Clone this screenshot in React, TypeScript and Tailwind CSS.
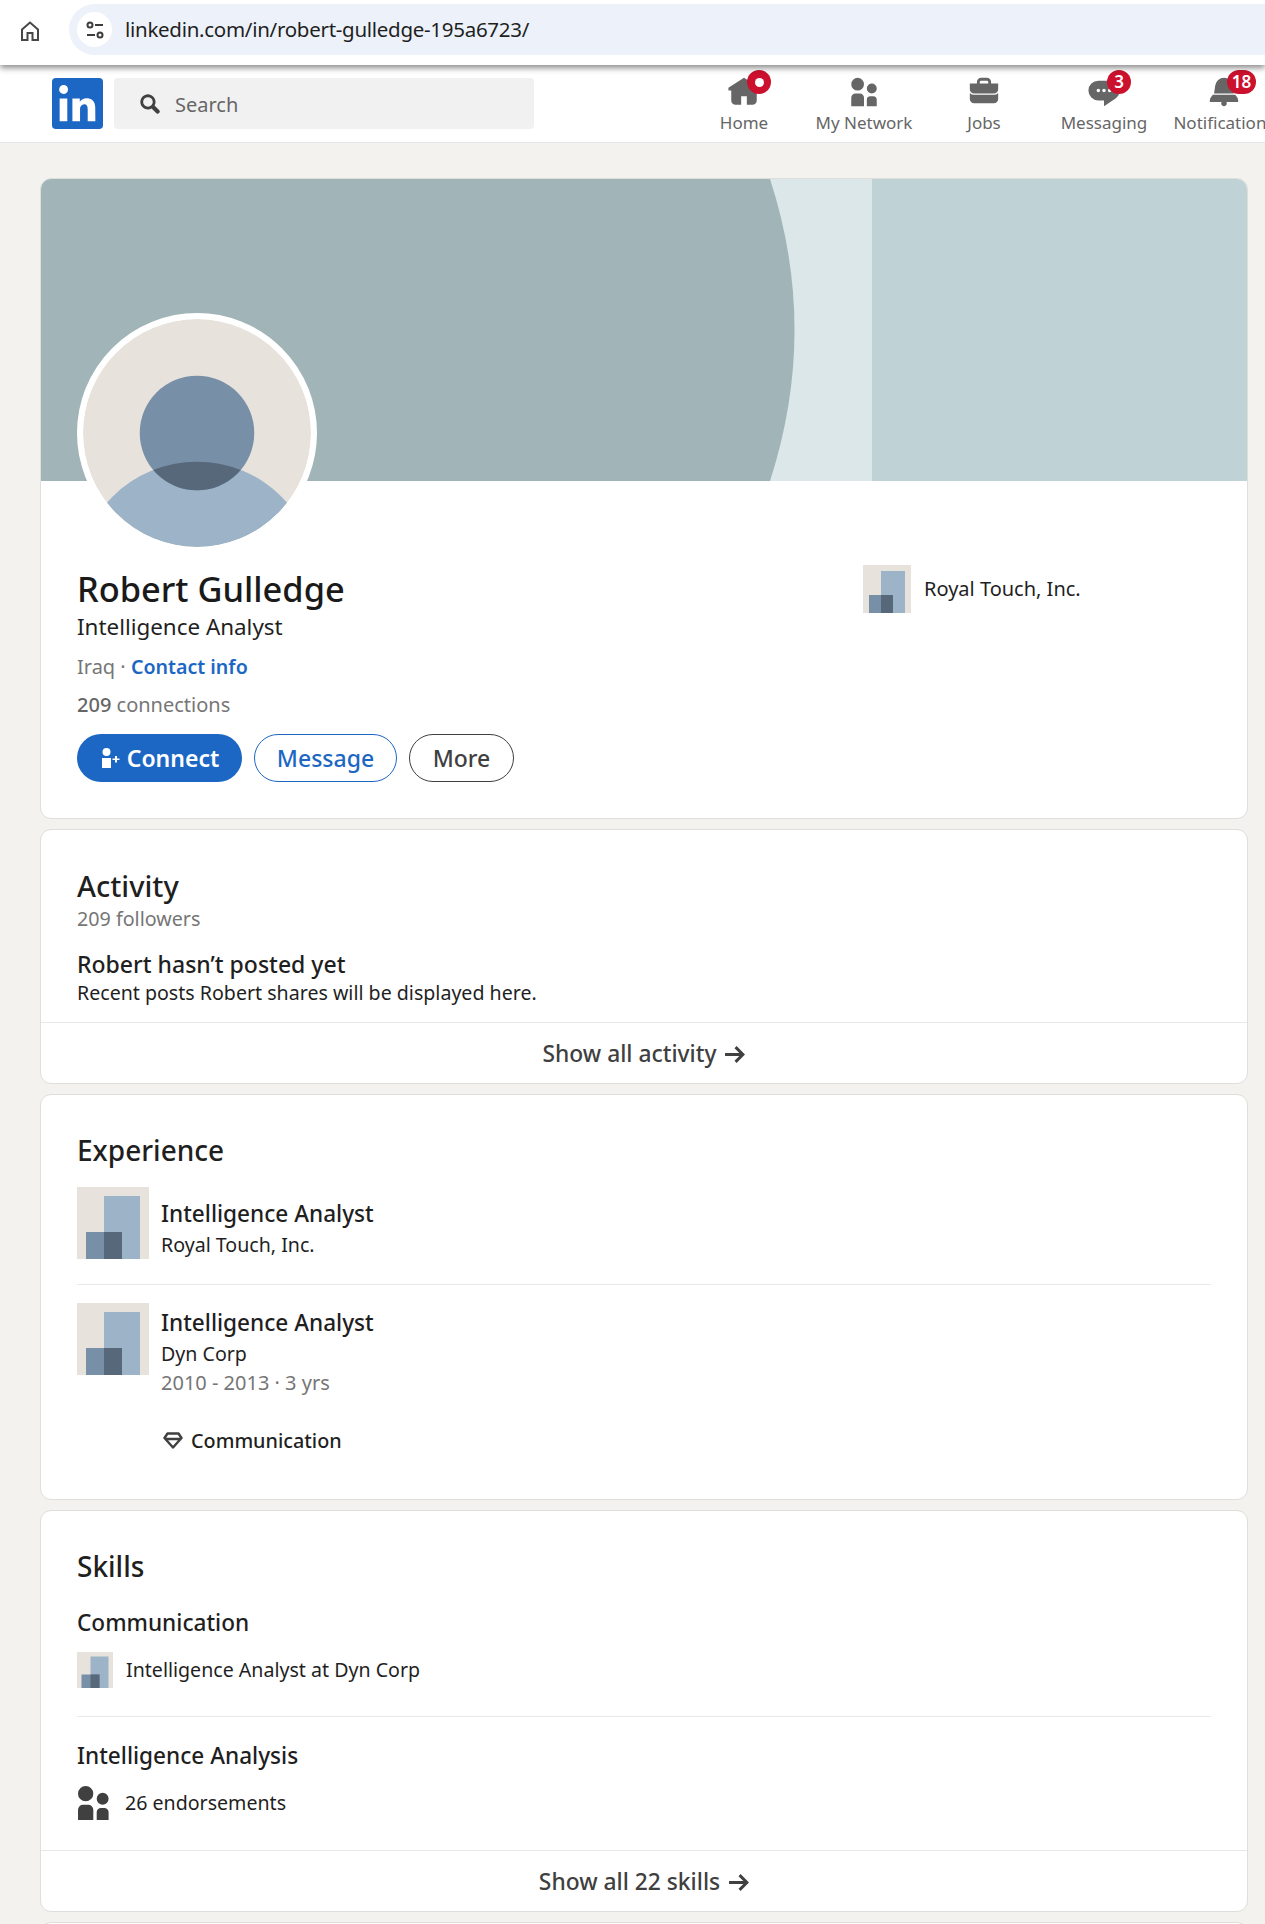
import type { ReactNode } from "react";

function GhostLogo({ size }: { size: number }) {
  return (
    <svg width={size} height={size} viewBox="0 0 72 72" className="shrink-0">
      <rect width="72" height="72" fill="#e7e2dc" />
      <rect x="27" y="9" width="36" height="63" fill="#9db3c8" />
      <rect x="9" y="45" width="36" height="27" fill="#788fa8" />
      <rect x="27" y="45" width="18" height="27" fill="#56687a" />
    </svg>
  );
}

function Avatar() {
  return (
    <svg viewBox="0 0 227 227" className="block h-full w-full rounded-full">
      <defs>
        <clipPath id="inner">
          <circle cx="113.5" cy="113.5" r="113.5" />
        </clipPath>
        <clipPath id="head">
          <circle cx="113.5" cy="113.5" r="57" />
        </clipPath>
      </defs>
      <g clipPath="url(#inner)">
        <rect width="227" height="227" fill="#e7e2dc" />
        <circle cx="113.5" cy="261" r="119" fill="#9db3c8" />
        <circle cx="113.5" cy="113.5" r="57" fill="#788fa8" />
        <circle cx="113.5" cy="261" r="119" fill="#56687a" clipPath="url(#head)" />
      </g>
    </svg>
  );
}

function Badge({ children, className }: { children: ReactNode; className: string }) {
  return (
    <span
      className={`absolute flex h-6 items-center justify-center rounded-full bg-[#cb112d] text-[17px] font-semibold text-white ${className}`}
    >
      {children}
    </span>
  );
}

function NavItem({ label, path, children }: { label: string; path: string; children?: ReactNode }) {
  return (
    <div className="flex w-[120px] shrink-0 flex-col items-center whitespace-nowrap">
      <div className="relative mt-[1px] h-[34px] w-[34px]">
        <svg viewBox="0 0 24 24" className="h-[34px] w-[34px] fill-[#666666]">
          <path d={path} />
        </svg>
        {children}
      </div>
      <span className="mt-[2px] text-[17px] leading-[24px] text-[#666666]">{label}</span>
    </div>
  );
}

function Card({ children, className = "" }: { children: ReactNode; className?: string }) {
  return (
    <section
      className={`relative overflow-hidden rounded-[11px] border border-[#dfdeda] bg-white ${className}`}
    >
      {children}
    </section>
  );
}

function ShowAll({ label }: { label: string }) {
  return (
    <div className="flex h-[61px] items-center justify-center gap-[8px] border-t border-[#e8e8e8] pt-[2px] text-[22.8px] font-medium text-[#404040]">
      {label}
      <svg viewBox="0 0 20 18" fill="none" stroke="#404040" strokeWidth="2.800" className="h-[19px] w-[21px]">
        <path d="M1 9h17M11 2l7 7-7 7" />
      </svg>
    </div>
  );
}

export default function App() {
  return (
    <div className="h-[1924px] overflow-hidden bg-[#f3f2ef] font-['Noto_Sans',sans-serif] text-[#1f1f1f]">
      {/* browser bar */}
      <div className="relative z-10 flex h-[65px] items-start bg-white pt-[4px] shadow-[0_3px_6px_rgba(0,0,0,0.45)]">
        <svg viewBox="0 0 24 24" fill="none" stroke="#474747" strokeWidth="2" className="ml-[18px] mt-[15px] h-6 w-6">
          <path d="M4 10.5 12 3.5l8 7V21h-5.500v-7h-5v7H4z" />
        </svg>
        <div className="ml-[27px] flex h-[51px] flex-1 items-center rounded-l-full bg-[#edf2fa] pl-[8px]">
          <div className="flex h-[35px] w-[35px] items-center justify-center rounded-full bg-white">
            <svg viewBox="0 0 20 20" fill="none" stroke="#3c3c3c" strokeWidth="2" className="h-5 w-5">
              <circle cx="5" cy="5" r="2.500" />
              <path d="M10 5h8M2 15h8" />
              <circle cx="15" cy="15" r="2.500" />
            </svg>
          </div>
          <span className="ml-[13px] text-[20.5px] tracking-[-0.28px] text-[#1f1f1f]">linkedin.com/in/robert-gulledge-195a6723/</span>
        </div>
      </div>

      {/* linkedin nav */}
      <header className="flex h-[78px] items-center overflow-hidden border-b border-[#e6e6e6] bg-white pl-[52px]">
        <svg viewBox="2 2 20 20" className="h-[51px] w-[51px] shrink-0 fill-[#1d67c4]">
          <path d="M20.500 2h-17A1.500 1.500 0 002 3.500v17A1.500 1.500 0 003.500 22h17a1.500 1.500 0 001.500-1.500v-17A1.500 1.500 0 0020.500 2zM8 19H5v-9h3zM6.500 8.250A1.750 1.750 0 118.300 6.500a1.780 1.780 0 01-1.800 1.750zM19 19h-3v-4.740c0-1.420-.6-1.930-1.380-1.930A1.740 1.740 0 0013 14.190a.66.66 0 000 .14V19h-3v-9h2.900v1.300a3.110 3.110 0 012.700-1.400c1.550 0 3.360.86 3.360 3.660z" />
        </svg>
        <div className="ml-[11px] flex h-[51px] w-[420px] shrink-0 items-center rounded-[4px] bg-[#f1f1f1] pl-[25px]">
          <svg viewBox="0 0 16 16" className="h-[22px] w-[22px] fill-[#404040]">
            <path d="M14.560 12.440L11.300 9.180a5.510 5.510 0 10-2.120 2.120l3.260 3.260a1.500 1.500 0 102.120-2.120zM3 6.500A3.500 3.500 0 116.500 10 3.500 3.500 0 013 6.500z" />
          </svg>
          <span className="ml-[14px] pt-[3px] text-[20px] text-[#666666]">Search</span>
        </div>
        <nav className="ml-[150px] flex shrink-0 pt-[2px]">
          <NavItem label="Home" path="M23 9v2h-2v7a3 3 0 01-3 3h-4v-6h-4v6H6a3 3 0 01-3-3v-7H1V9l11-7 5 3.180V2h3v5.090z">
            <Badge className="left-[20px] top-[-5px] w-6">
              <span className="h-[9px] w-[9px] rounded-full bg-white" />
            </Badge>
          </NavItem>
          <NavItem label="My Network" path="M12 16v6H3v-6a3 3 0 013-3h3a3 3 0 013 3zm5.500-3A3.500 3.500 0 1014 9.500a3.500 3.500 0 003.500 3.500zm1 2h-2a2.500 2.500 0 00-2.500 2.500V22h7v-4.500a2.500 2.500 0 00-2.500-2.500zM7.500 2A4.500 4.500 0 1012 6.500 4.490 4.490 0 007.500 2z" />
          <NavItem label="Jobs" path="M17 6V5a3 3 0 00-3-3h-4a3 3 0 00-3 3v1H2v4a3 3 0 003 3h14a3 3 0 003-3V6zM9 5a1 1 0 011-1h4a1 1 0 011 1v1H9zm10 9a4 4 0 003-1.380V17a3 3 0 01-3 3H5a3 3 0 01-3-3v-4.380A4 4 0 005 14z" />
          <NavItem label="Messaging" path="M16 4H8a7 7 0 000 14h4v4l8.160-5.390A6.780 6.780 0 0023 11a7 7 0 00-7-7zm-8 8.250A1.250 1.250 0 119.250 11 1.250 1.250 0 018 12.250zm4 0A1.250 1.250 0 1113.250 11 1.250 1.250 0 0112 12.250zm4 0A1.250 1.250 0 1117.250 11 1.250 1.250 0 0116 12.250z">
            <Badge className="left-[20px] top-[-5px] w-6">3</Badge>
          </NavItem>
          <NavItem label="Notifications" path="M22 19h-8.280a2 2 0 11-3.440 0H2v-1a4.520 4.520 0 011.170-2.830l1-1.170h15.700l1 1.170A4.520 4.520 0 0122 18zM18.210 7.440A6.270 6.270 0 0012 2a6.270 6.270 0 00-6.210 5.440L5 13h14z">
            <Badge className="left-[20px] top-[-5px] w-[29px]">18</Badge>
          </NavItem>
        </nav>
      </header>

      <main className="flex flex-col gap-[10px] pl-[40px] pr-[17px] pt-[35px]">
        {/* profile card */}
        <Card className="h-[641px]">
          <svg viewBox="0 0 1206 303" preserveAspectRatio="none" className="block h-[302px] w-full">
            <rect width="1206" height="303" fill="#bfd3d6" />
            <rect width="831" height="303" fill="#dbe7e9" />
            <path d="M0 0H729Q778 151 729 303H0z" fill="#a1b4b8" />
          </svg>
          <div className="absolute left-[36px] top-[134px] h-[240px] w-[240px] rounded-full border-[6.5px] border-white bg-white">
            <Avatar />
          </div>
          <div className="flex justify-between pl-[36px] pr-[166px]">
            <div className="pt-[85px]">
              <h1 className="text-[34.4px] font-medium leading-[45px] text-[#1a1a1a]">Robert Gulledge</h1>
              <p className="mt-[1px] text-[22.4px] leading-[30px]">Intelligence Analyst</p>
              <p className="mt-[11px] text-[20px] leading-[28px] text-[#767676]">
                Iraq · <span className="text-[19.6px] font-semibold text-[#1d67c4]">Contact info</span>
              </p>
              <p className="mt-[10px] text-[20px] leading-[28px] text-[#767676]">
                <span className="font-medium text-[#666666]">209</span> connections
              </p>
              <div className="mt-[15px] flex gap-3">
                <div className="flex h-[48px] w-[165px] items-center justify-center gap-[7px] rounded-full bg-[#1d67c4] text-[23px] font-semibold text-white">
                  <svg viewBox="0 0 20 24" className="h-[24px] w-[20px] fill-white">
                    <circle cx="6.500" cy="6" r="4" />
                    <path d="M2 12h9v10H2zM15 10h2v2.500h2.500v1.500H17v2.500h-2V14h-2.500v-1.500H15z" />
                  </svg>
                  Connect
                </div>
                <div className="flex h-[48px] w-[143px] items-center justify-center rounded-full border-[1.5px] border-[#1d67c4] text-[23px] font-medium text-[#1d67c4]">
                  Message
                </div>
                <div className="flex h-[48px] w-[105px] items-center justify-center rounded-full border-[1.5px] border-[#404040] text-[23px] font-medium text-[#404040]">
                  More
                </div>
              </div>
            </div>
            <div className="mt-[84px] flex h-[48px] w-[218px] items-center gap-[13px] self-start">
              <GhostLogo size={48} />
              <span className="whitespace-nowrap text-[20px]">Royal Touch, Inc.</span>
            </div>
          </div>
        </Card>

        {/* activity */}
        <Card className="h-[255px]">
          <div className="h-[192px] px-[36px] pt-[36px]">
            <h2 className="text-[29px] font-medium leading-[40px]">Activity</h2>
            <p className="text-[19.7px] leading-[26px] text-[#767676]">209 followers</p>
            <p className="mt-[17px] text-[23px] font-medium leading-[30px]">Robert hasn’t posted yet</p>
            <p className="text-[19.6px] leading-[28px]">Recent posts Robert shares will be displayed here.</p>
          </div>
          <ShowAll label="Show all activity" />
        </Card>

        {/* experience */}
        <Card className="h-[406px] px-[36px] pt-[35px]">
          <h2 className="text-[28px] font-medium leading-[40px]">Experience</h2>
          <div className="mt-[17px] flex h-[98px] gap-3 border-b border-[#e8e8e8]">
            <GhostLogo size={72} />
            <div className="pt-[12px]">
              <p className="text-[22.6px] font-medium leading-[30px]">Intelligence Analyst</p>
              <p className="mt-[1px] text-[19.6px] leading-[30px]">Royal Touch, Inc.</p>
            </div>
          </div>
          <div className="mt-[18px] flex gap-3">
            <GhostLogo size={72} />
            <div className="pt-[5px]">
              <p className="text-[22.6px] font-medium leading-[30px]">Intelligence Analyst</p>
              <p className="mt-[2px] text-[19.6px] leading-[28px]">Dyn Corp</p>
              <p className="mt-[1px] text-[20px] leading-[28px] text-[#767676]">2010 - 2013 · 3 yrs</p>
              <div className="ml-[2px] mt-[29px] flex items-center gap-[8px] text-[19.8px] font-medium leading-[30px]">
                <svg viewBox="0 0 20 18" fill="none" stroke="#404040" strokeWidth="2.400" className="h-[18px] w-[20px]">
                  <path d="M4.500 1.500h11L18.500 6 10 15.500 1.500 6zM2.500 7h15" strokeLinejoin="round" />
                </svg>
                Communication
              </div>
            </div>
          </div>
        </Card>

        {/* skills */}
        <Card className="h-[402px]">
          <div className="h-[339px] px-[36px] pt-[35px]">
            <h2 className="text-[28px] font-medium leading-[40px]">Skills</h2>
            <div className="h-[131px] border-b border-[#e8e8e8] pt-[22px]">
              <p className="text-[22.6px] font-medium leading-[30px]">Communication</p>
              <div className="mt-[14px] flex items-center gap-[13px]">
                <GhostLogo size={36} />
                <span className="text-[19.6px]">Intelligence Analyst at Dyn Corp</span>
              </div>
            </div>
            <div className="pt-[24px]">
              <p className="text-[22.6px] font-medium leading-[30px]">Intelligence Analysis</p>
              <div className="mt-[15px] flex items-center gap-[13px]">
                <svg viewBox="3 2 20 20" className="ml-[1px] h-[34px] w-[34px] shrink-0 fill-[#404040]">
                  <path d="M12 16v6H3v-6a3 3 0 013-3h3a3 3 0 013 3zm5.500-3A3.500 3.500 0 1014 9.500a3.500 3.500 0 003.500 3.500zm1 2h-2a2.500 2.500 0 00-2.500 2.500V22h7v-4.500a2.500 2.500 0 00-2.500-2.500zM7.500 2A4.500 4.500 0 1012 6.500 4.490 4.490 0 007.500 2z" />
                </svg>
                <span className="text-[19.6px]">26 endorsements</span>
              </div>
            </div>
          </div>
          <ShowAll label="Show all 22 skills" />
        </Card>

        {/* top edge of the next card, cut off by the window */}
        <Card className="h-[40px]">
          <div />
        </Card>
      </main>
    </div>
  );
}
